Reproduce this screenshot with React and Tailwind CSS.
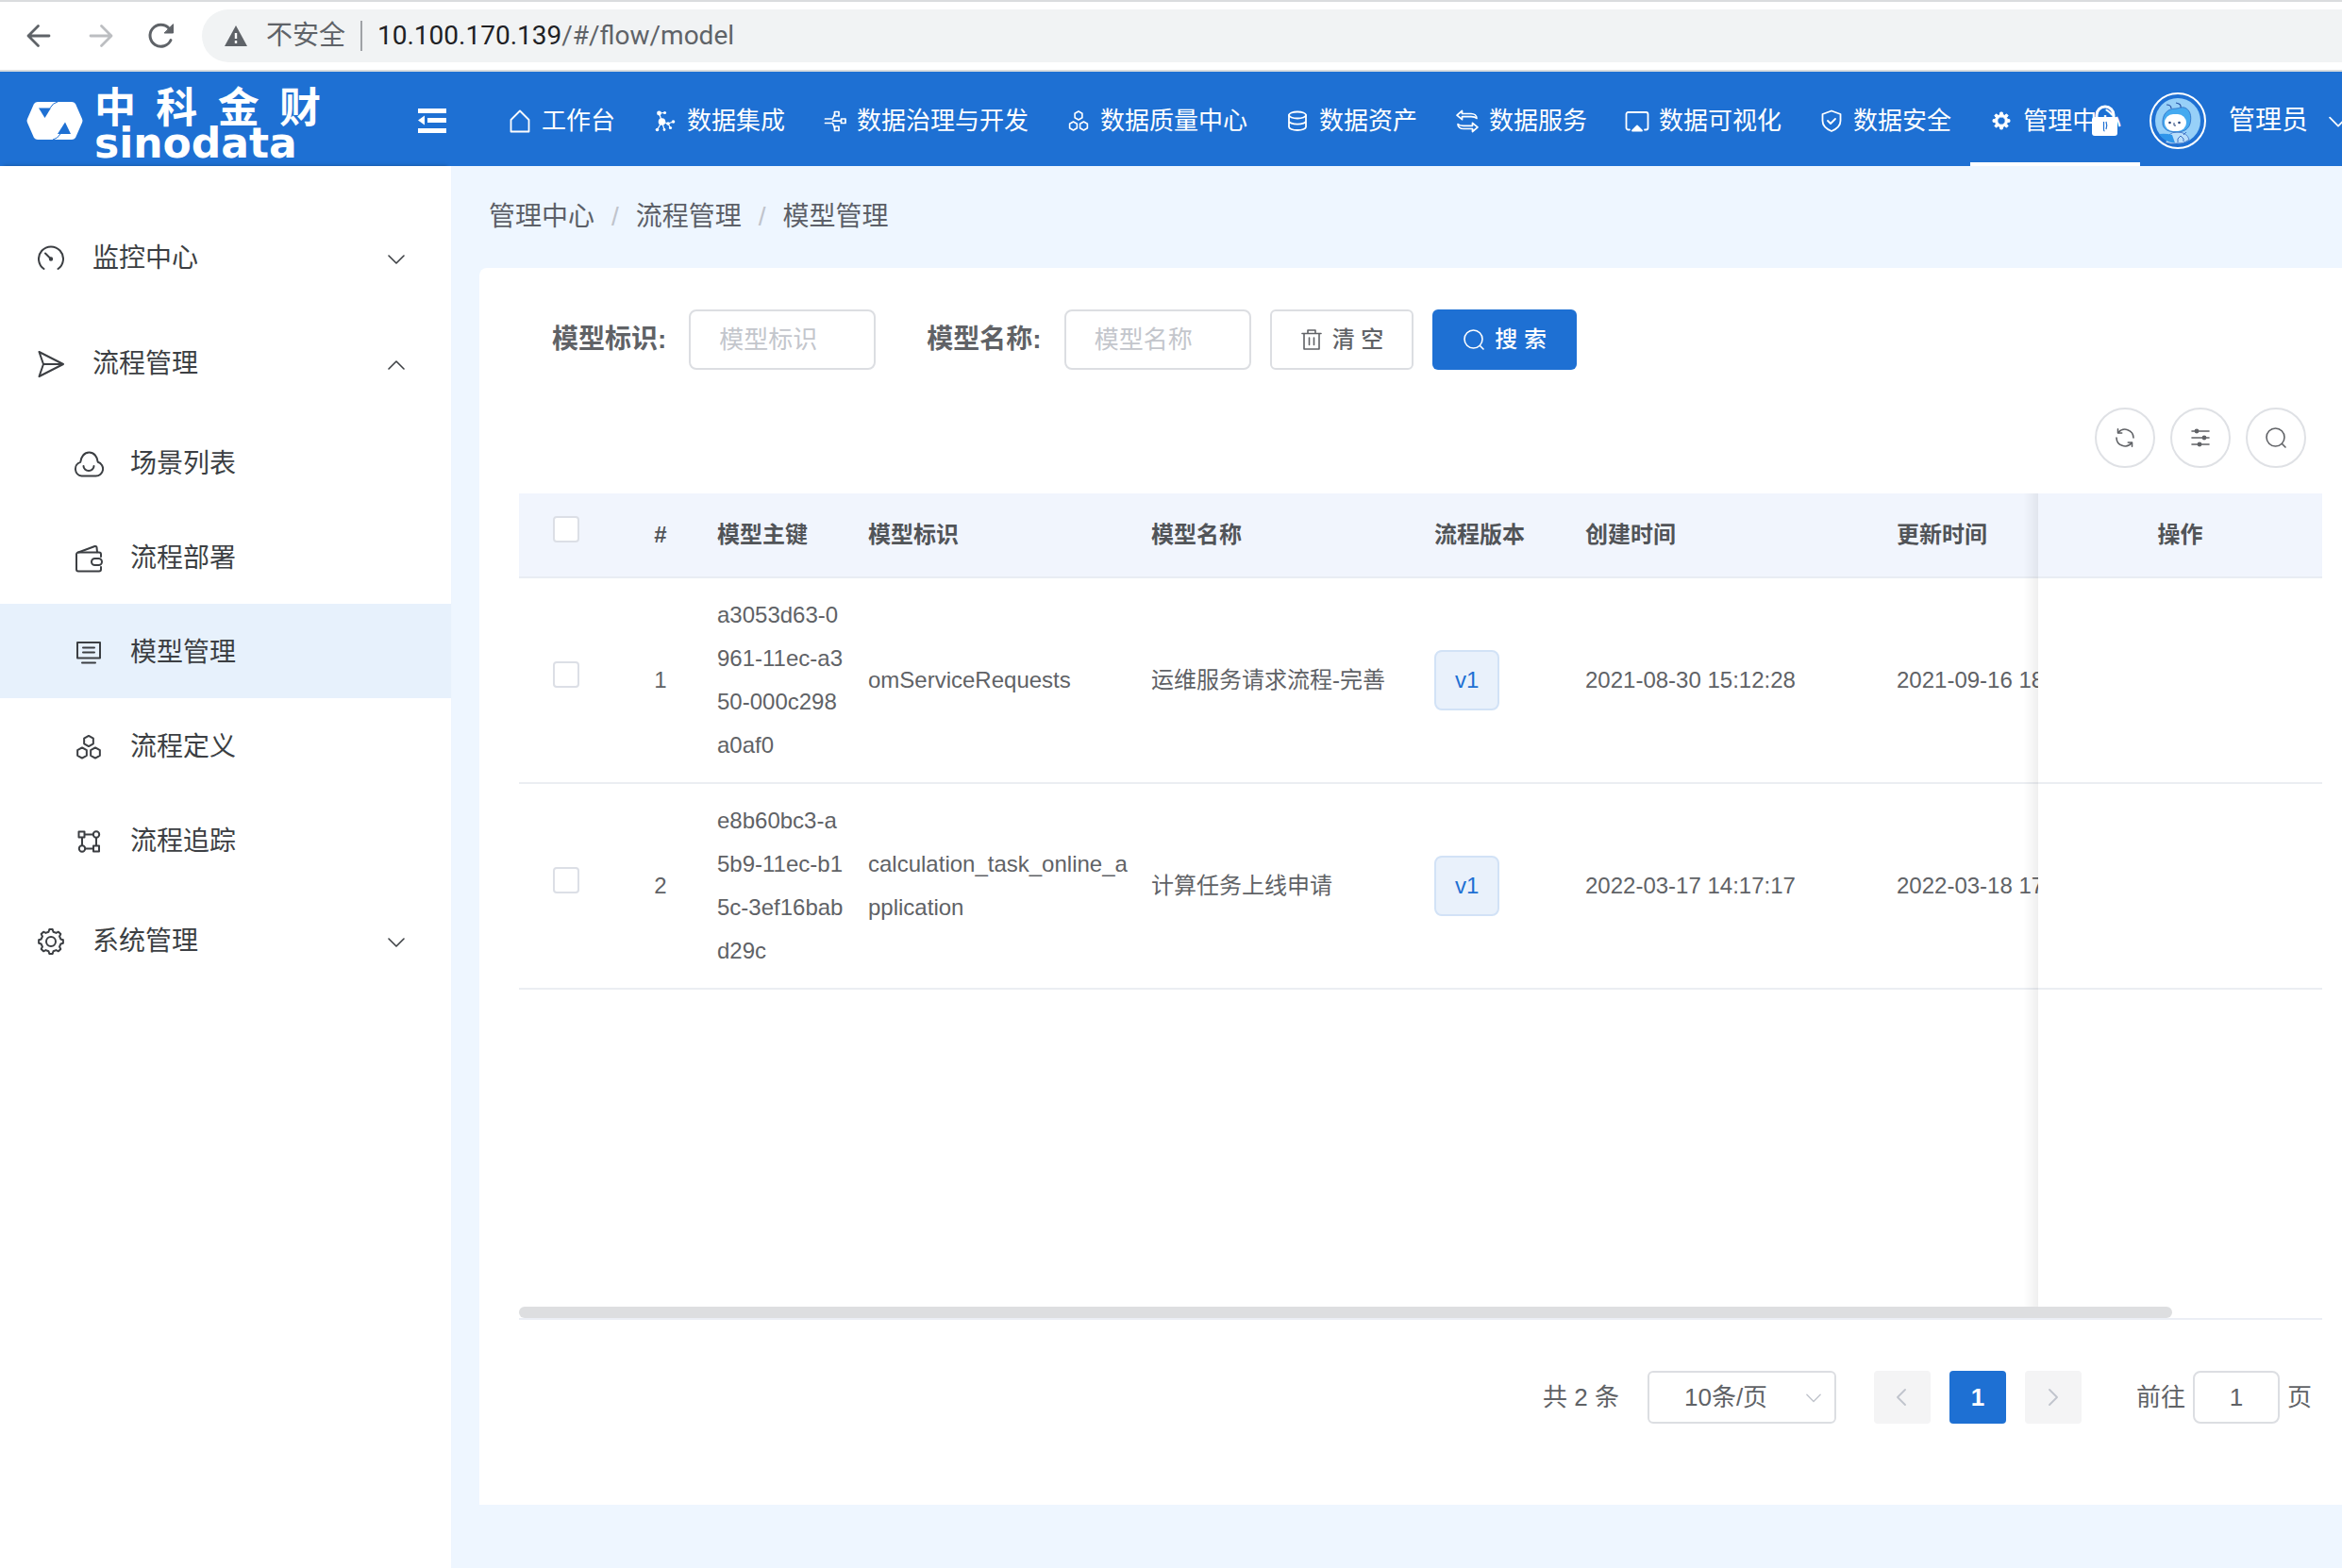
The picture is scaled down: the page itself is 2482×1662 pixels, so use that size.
import React, { useState } from 'react';

function Icon({ size = 26, box = size, width = 2, className = '', children }) {
  return (
    <svg
      width={size}
      height={size}
      viewBox={`0 0 ${box} ${box}`}
      fill="none"
      stroke="currentColor"
      strokeWidth={width}
      strokeLinecap="round"
      strokeLinejoin="round"
      className={`shrink-0 ${className}`}
      aria-hidden="true"
    >
      {children}
    </svg>
  );
}

const hexagon = (cx, cy, r) =>
  Array.from({ length: 6 }, (_, i) => {
    const a = (Math.PI / 3) * i - Math.PI / 2;
    return `${cx + r * Math.cos(a)},${cy + r * Math.sin(a)}`;
  }).join(' ');

const gearPoints = (c, outer, inner) => {
  const points = [];
  for (let i = 0; i < 8; i++) {
    const a = (Math.PI / 4) * i - Math.PI / 2;
    [[-0.24, inner], [-0.13, outer], [0.13, outer], [0.24, inner]].forEach(([d, r]) => {
      points.push(`${c + r * Math.cos(a + d)},${c + r * Math.sin(a + d)}`);
    });
  }
  return points.join(' ');
};

const HomeIcon = () => (
  <Icon width={1.8}>
    <path d="M3.5 24.5V12L13 2.5 22.5 12v12.500z" />
  </Icon>
);

const IntegrationIcon = () => (
  <Icon width={1.2}>
    <g fill="currentColor" stroke="none">
      <circle cx="6.500" cy="5" r="2.400" />
      <circle cx="12.500" cy="4.500" r="1.600" />
      <circle cx="9.500" cy="14" r="3.800" />
      <circle cx="4.500" cy="22.500" r="1.800" />
      <circle cx="12" cy="22.500" r="1.400" />
      <circle cx="16" cy="16" r="1.800" />
      <circle cx="21.500" cy="14" r="1.800" />
      <circle cx="18.500" cy="20.500" r="1.600" />
    </g>
    <path d="M6.500 5l3 9M9.500 14l-5 8.500M9.500 14l2.500 8.500M9.500 14l6.500 2 5.500-2M16 16l2.500 4.500M6.500 5l6-.5" />
  </Icon>
);

const GovernanceIcon = () => (
  <Icon width={1.7}>
    <path d="M2.500 11h8l2-4.500M2.500 15.500h8l2 5M10.500 13.200h8.500" />
    <rect x="12.500" y="3.500" width="4.500" height="4.500" />
    <rect x="19.500" y="11" width="4.500" height="4.500" />
    <rect x="12.500" y="19" width="4.500" height="4.500" />
  </Icon>
);

const QualityIcon = () => (
  <Icon width={1.6}>
    <polygon points={hexagon(13, 7.5, 4.5)} />
    <polygon points={hexagon(7.500, 18.5, 4.5)} />
    <polygon points={hexagon(18.500, 18.5, 4.5)} />
  </Icon>
);

const AssetIcon = () => (
  <Icon width={1.8}>
    <ellipse cx="13" cy="7" rx="9" ry="3.500" />
    <path d="M4 7v12.500c0 2 4 3.500 9 3.500s9-1.500 9-3.500V7M4 13.200c0 2 4 3.500 9 3.500s9-1.500 9-3.500" />
  </Icon>
);

const ServiceIcon = () => (
  <Icon width={1.7}>
    <path d="M7.500 2.500v3H17c3.500 0 6 2 6 5-1.500-1.500-3.500-1.800-6-1.800H7.500v3L2 7.200z" />
    <path d="M18.500 24.500v-3H9c-3.500 0-6-2-6-5 1.500 1.500 3.500 1.800 6 1.800h9.500v-3l5.500 4.600z" />
  </Icon>
);

const VisualIcon = () => (
  <Icon width={1.8}>
    <path d="M5 22.500H3.500a2 2 0 0 1-2-2V6a2 2 0 0 1 2-2h19a2 2 0 0 1 2 2v14.500a2 2 0 0 1-2 2H21" />
    <path d="M13 18.500l5 5H8z" fill="currentColor" />
  </Icon>
);

const SecurityIcon = () => (
  <Icon width={1.8}>
    <path d="M13 2.500l9.500 3.500v7c0 5-3.500 8.500-9.500 11-6-2.500-9.500-6-9.500-11V6z" />
    <path d="M9 13l3 3 5-5" />
  </Icon>
);

const AdminIcon = () => (
  <Icon width={1}>
    <path
      fillRule="evenodd"
      fill="currentColor"
      d={`M${gearPoints(13, 9, 6.6).replace(/ /g, 'L')}ZM13 8.800a4.200 4.200 0 1 0 0 8.400 4.200 4.200 0 1 0 0-8.400Z`}
    />
  </Icon>
);

const GaugeIcon = () => (
  <Icon size={28}>
    <path d="M6.500 25a13 13 0 1 1 15 0" />
    <path d="M8 8.500l6 6" />
    <circle cx="14" cy="14.500" r="1.200" fill="currentColor" />
  </Icon>
);

const SendIcon = () => (
  <Icon size={28}>
    <path d="M1.500 1L27 14 1.500 27l4.500-13zM6 14h21" />
  </Icon>
);

const SettingIcon = () => (
  <Icon size={28}>
    <polygon points={gearPoints(14, 13, 10.6)} />
    <circle cx="14" cy="14" r="5" />
  </Icon>
);

const CloudIcon = () => (
  <Icon size={32}>
    <path d="M8.500 28.500a7.500 7.500 0 0 1-1.300-14.600C7.800 8 11.500 3.500 16.500 3.500s8.800 4.500 9.200 10.300A7.500 7.500 0 0 1 23.500 28.500z" />
    <path d="M10.500 18a5.500 5 0 0 0 11 0" />
  </Icon>
);

const WalletIcon = () => (
  <Icon size={32}>
    <path d="M29 25v2.500a2 2 0 0 1-2 2H5a2 2 0 0 1-2-2v-16a2 2 0 0 1 2-2h22a2 2 0 0 1 2 2V14" />
    <path d="M5 9.500L22.500 3a1.500 1.500 0 0 1 2 1.200l.5 5" />
    <rect x="19" y="16" width="11" height="7" rx="3.500" />
  </Icon>
);

const ModelIcon = () => (
  <Icon size={32}>
    <rect x="4" y="5" width="24" height="16.500" />
    <path d="M10 10.500h12M10 15.500h12M9 26.500h14" />
  </Icon>
);

const DefinitionIcon = () => (
  <Icon size={32}>
    <polygon points={hexagon(16, 9.5, 5.6)} />
    <polygon points={hexagon(9, 22, 5.6)} />
    <polygon points={hexagon(23, 22, 5.6)} />
  </Icon>
);

const TraceIcon = () => (
  <Icon size={32}>
    <rect x="5.500" y="5.500" width="6" height="6" />
    <circle cx="24" cy="8.500" r="3.200" />
    <circle cx="9" cy="23.500" r="3.200" />
    <rect x="21" y="20.500" width="6" height="6" />
    <path d="M12 8.500h8.500M9 12v8M24 12v8M12.500 23.500H21" />
  </Icon>
);

const Chevron = ({ up, size = 18, width = 1.6 }) => (
  <Icon size={size} box={18} width={width}>
    <path d={up ? 'M1 14l8-8 8 8' : 'M1 6l8 8 8-8'} />
  </Icon>
);

const SearchIcon = ({ width = 1.6 }) => (
  <Icon size={24} width={width}>
    <circle cx="11.500" cy="11.500" r="9.500" />
    <path d="M18.500 18.500l3.500 3.500" />
  </Icon>
);

const TrashIcon = () => (
  <Icon size={24} width={1.6}>
    <path d="M2 5.500h20M8 5.500V2h8v3.500M4 5.500V22h16V5.500M9.500 10v7.500M14.500 10v7.500" />
  </Icon>
);

const RefreshIcon = () => (
  <Icon size={24} width={1.6}>
    <path d="M5 6.500A9 9 0 0 1 21 12M19 17.500A9 9 0 0 1 3 12" />
    <path d="M4.500 2.800v4.200h4.200M19.500 21.200v-4.200h-4.200" />
  </Icon>
);

const FilterIcon = () => (
  <Icon size={24} width={1.6}>
    <path d="M3 5h18M3 12h18M3 19h18" />
    <g fill="currentColor" stroke="none">
      <circle cx="8" cy="5" r="2.400" />
      <circle cx="16" cy="12" r="2.400" />
      <circle cx="11" cy="19" r="2.400" />
    </g>
  </Icon>
);

const LogoMark = () => (
  <svg width="60" height="42" viewBox="0 0 60 42" className="shrink-0" aria-hidden="true">
    <path d="M12 1h36q2.500 0 4 2l7 16q1 2 0 4l-7 16q-1.500 2-4 2H12q-2.500 0-4-2L1 23q-1-2 0-4L8 3q1.500-2 4-2z" fill="#fff" />
    <path d="M13 7.500h13L19.500 18z" fill="#1e70d3" />
    <path d="M33 35h14L41 22.500z" fill="#1e70d3" />
    <path d="M33 1q-5 1-8 6.500M28 41q5-1 8-6" fill="none" stroke="#1e70d3" strokeWidth="1" />
  </svg>
);

const LockIcon = () => (
  <svg width="28" height="34" viewBox="0 0 28 34" className="shrink-0" aria-hidden="true">
    <path d="M5 14v-3a9 9 0 0 1 18 0v3" fill="none" stroke="#fff" strokeWidth="3" />
    <rect x="0" y="13" width="27" height="20" rx="3" fill="#fff" />
    <path d="M12.500 18v8q0 2 1 2M15 18q1.500 4 0 8" fill="none" stroke="#1e70d3" strokeWidth="1.200" />
  </svg>
);

const Avatar = () => (
  <svg width="60" height="60" viewBox="0 0 60 60" className="shrink-0" role="img" aria-label="管理员">
    <circle cx="30" cy="30" r="29" fill="none" stroke="#fff" strokeWidth="2" />
    <circle cx="30" cy="30" r="24" fill="#97d0f8" />
    <path d="M17 53q2-11 12-11 11 0 13 8-6 5-13 4-7 1-12-1z" fill="#b9defa" stroke="#3d6fc4" strokeWidth="0.800" />
    <path d="M10 44q7-1 14 1l3 8.500q-11-.5-17-9.500z" fill="#2e95ea" />
    <path d="M14 34c-1-11 5-17 14-17 3 0 5-2 9-1 6 2 8 9 6 17-2 7-8 9-15 9-8 0-13-3-14-8z" fill="#45aaf0" stroke="#2e6fc4" strokeWidth="0.800" />
    <rect x="16" y="23" width="23" height="18" rx="9" fill="#fff" />
    <circle cx="21.500" cy="32" r="1.300" fill="#27457a" />
    <circle cx="31.500" cy="32" r="1.300" fill="#27457a" />
    <path d="M26 32v3h2" fill="none" stroke="#27457a" strokeWidth="1" />
    <path d="M23 17q0-4-5-4M33 16q1-4-5-5" fill="none" stroke="#2b57a8" strokeWidth="1.200" />
    <path d="M30 53v-4l3-3 3 3v3M36 45l3-3" fill="none" stroke="#3d6fc4" strokeWidth="1" />
  </svg>
);

const navItems = [
  { label: '工作台', icon: HomeIcon },
  { label: '数据集成', icon: IntegrationIcon },
  { label: '数据治理与开发', icon: GovernanceIcon },
  { label: '数据质量中心', icon: QualityIcon },
  { label: '数据资产', icon: AssetIcon },
  { label: '数据服务', icon: ServiceIcon },
  { label: '数据可视化', icon: VisualIcon },
  { label: '数据安全', icon: SecurityIcon },
  { label: '管理中心', icon: AdminIcon, active: true }
];

const flowItems = [
  { label: '场景列表', icon: CloudIcon },
  { label: '流程部署', icon: WalletIcon },
  { label: '模型管理', icon: ModelIcon, active: true },
  { label: '流程定义', icon: DefinitionIcon },
  { label: '流程追踪', icon: TraceIcon }
];

const models = [
  {
    id: 'a3053d63-0961-11ec-a350-000c298a0af0',
    key: 'omServiceRequests',
    name: '运维服务请求流程-完善',
    version: 'v1',
    created: '2021-08-30 15:12:28',
    updated: '2021-09-16 18:04:32'
  },
  {
    id: 'e8b60bc3-a5b9-11ec-b15c-3ef16babd29c',
    key: 'calculation_task_online_application',
    name: '计算任务上线申请',
    version: 'v1',
    created: '2022-03-17 14:17:17',
    updated: '2022-03-18 17:20:41'
  }
];

function BrowserBar() {
  return (
    <div className="flex h-[76px] items-center border-t-2 border-b-2 border-[#dadcde] bg-white pl-7 text-[28px] text-[#5f6368]">
      <button type="button" aria-label="后退">
        <Icon size={26} width={2.8}>
          <path d="M24 13H2M12.500 2.500L2 13l10.500 10.500" />
        </Icon>
      </button>
      <button type="button" aria-label="前进" className="ml-10 text-[#bcbec1]">
        <Icon size={26} width={2.8}>
          <path d="M2 13h22M13.500 2.500L24 13 13.500 23.500" />
        </Icon>
      </button>
      <button type="button" aria-label="重新加载" className="ml-9">
        <Icon size={30} width={3}>
          <path d="M25 19.500A11.500 11.500 0 1 1 23 7" />
          <path d="M27.500 3v9h-9z" fill="currentColor" strokeWidth="1" />
        </Icon>
      </button>
      <div className="ml-7 flex h-14 flex-1 items-center rounded-l-full bg-[#f1f3f4] pl-6">
        <svg width="24" height="22" viewBox="0 0 24 22" aria-hidden="true">
          <path d="M12 0l12 22H0z" fill="#5f6368" />
          <path d="M12 8v6M12 16v3" stroke="#fff" strokeWidth="2.400" />
        </svg>
        <span className="ml-5">不安全</span>
        <span className="mx-4 h-8 w-0.5 bg-[#9fa2a6]"></span>
        <span className="font-[Roboto]">
          <span className="text-[#202124]">10.100.170.139</span>/#/flow/model
        </span>
      </div>
    </div>
  );
}

function Header() {
  return (
    <header className="flex h-[100px] items-center overflow-x-clip bg-[#1e70d3] pt-1 text-white">
      <div className="flex w-[518px] shrink-0 items-center justify-between pr-[45px] pl-7">
        <a href="#/" className="flex items-center gap-3">
          <LogoMark />
          <span className="flex w-60 flex-col pt-1">
            <span className="flex justify-between text-[44px] leading-[44px] font-bold">
              <span>中</span>
              <span>科</span>
              <span>金</span>
              <span>财</span>
            </span>
            <span className="font-['DejaVu_Sans'] text-[44px] leading-[30px] font-bold">sinodata</span>
          </span>
        </a>
        <button type="button" aria-label="收起菜单">
          <svg width="30" height="26" viewBox="0 0 30 26" fill="currentColor" aria-hidden="true">
            <path d="M0 0h30v5H0zM10 10h20v5H10zM0 21h30v5H0zM0 12.500l7-5v10z" />
          </svg>
        </button>
      </div>
      <nav className="flex h-full min-w-0 flex-1">
        {navItems.map(({ label, icon: NavIcon, active }) => (
          <a
            key={label}
            href="#/"
            className={`flex shrink-0 items-center gap-[10px] border-y-4 border-transparent px-5 text-[26px] ${
              active ? 'border-b-white' : ''
            }`}
          >
            <NavIcon />
            {label}
          </a>
        ))}
      </nav>
      <div className="relative flex w-[265px] shrink-0 items-center">
        <button type="button" aria-label="锁屏">
          <LockIcon />
        </button>
        <span className="ml-[33px] shrink-0">
          <Avatar />
        </span>
        <button type="button" className="ml-6 flex shrink-0 items-center gap-[22px] text-[28px]">
          管理员
          <Chevron size={20} />
        </button>
      </div>
    </header>
  );
}

function SideGroup({ icon: GroupIcon, label, open, onClick }) {
  return (
    <button type="button" onClick={onClick} className="flex h-28 w-full items-center pt-1 pr-[49px] pl-10 text-left">
      <GroupIcon />
      <span className="ml-[30px] flex-1">{label}</span>
      <Chevron up={open} />
    </button>
  );
}

function Sidebar() {
  const [open, setOpen] = useState(true);

  return (
    <aside className="w-[478px] shrink-0 bg-white pt-10 text-[28px] text-[#3c3f43] shadow-[0_-4px_4px_-4px_rgba(0,0,0,0.3)]">
      <SideGroup icon={GaugeIcon} label="监控中心" />
      <SideGroup icon={SendIcon} label="流程管理" open={open} onClick={() => setOpen(!open)} />
      {open &&
        flowItems.map(({ label, icon: ItemIcon, active }) => (
          <a
            key={label}
            href="#/flow/model"
            className={`flex h-[100px] items-center gap-7 pt-1 pl-[78px] ${active ? 'bg-[#e7f1fc]' : ''}`}
          >
            <ItemIcon />
            {label}
          </a>
        ))}
      <SideGroup icon={SettingIcon} label="系统管理" />
    </aside>
  );
}

function Checkbox({ label }) {
  return (
    <input
      type="checkbox"
      aria-label={label}
      className="mx-auto mb-3 block size-7 appearance-none rounded-sm border-2 border-[#dcdfe6] bg-white checked:bg-[#1e70d3]"
    />
  );
}

function SearchForm() {
  const inputClass =
    'h-16 w-[198px] rounded-lg border-2 border-[#dcdee2] bg-white px-[30px] text-[26px] text-[#606266] placeholder:text-[#c3c6cc]';
  return (
    <form className="flex items-center pl-[35px] text-[#606266]" onSubmit={e => e.preventDefault()}>
      <label htmlFor="model-key" className="mr-6 text-[28px] font-bold">模型标识:</label>
      <input id="model-key" placeholder="模型标识" className={inputClass} />
      <label htmlFor="model-name" className="mr-6 ml-[54px] text-[28px] font-bold">模型名称:</label>
      <input id="model-name" placeholder="模型名称" className={inputClass} />
      <button type="reset" className="ml-5 flex h-16 items-center gap-[10px] rounded-md border-2 border-[#dcdee2] px-[30px] text-2xl font-medium">
        <TrashIcon />
        清 空
      </button>
      <button type="submit" className="ml-5 flex h-16 items-center gap-[10px] rounded-md bg-[#1e70d3] px-8 text-2xl font-medium text-white">
        <SearchIcon />
        搜 索
      </button>
    </form>
  );
}

function ModelTable() {
  return (
    <div className="relative min-h-[876px] overflow-hidden border-b-2 border-[#ebeef5]">
      <table className="w-[2087px] table-fixed border-separate border-spacing-0 text-left text-2xl text-[#606266]">
        <colgroup>
          <col className="w-[100px]" />
          <col className="w-[100px]" />
          <col className="w-[160px]" />
          <col className="w-[300px]" />
          <col className="w-[300px]" />
          <col className="w-[160px]" />
          <col className="w-[330px]" />
          <col />
          <col className="w-[301px]" />
        </colgroup>
        <thead>
          <tr className="h-[90px] text-[#515458] *:border-b-2 *:border-[#e9edf3] *:bg-[#f1f5fd] *:px-[10px] *:font-bold">
            <th><Checkbox label="全选" /></th>
            <th className="text-center">#</th>
            <th>模型主键</th>
            <th>模型标识</th>
            <th>模型名称</th>
            <th>流程版本</th>
            <th>创建时间</th>
            <th>更新时间</th>
            <th className="sticky right-0 text-center">操作</th>
          </tr>
        </thead>
        <tbody>
          {models.map((model, index) => (
            <tr key={model.id} className="*:border-b-2 *:border-[#ebeef2] *:bg-white *:px-[10px] *:py-4">
              <td><Checkbox label={`选择 ${index + 1}`} /></td>
              <td className="text-center">{index + 1}</td>
              <td className="leading-[46px] break-all">{model.id}</td>
              <td className="leading-[46px] break-all">{model.key}</td>
              <td>{model.name}</td>
              <td>
                <span className="inline-flex h-16 items-center rounded-lg border-2 border-[#d2e2f6] bg-[#e9f1fb] px-5 text-[#1e70d3]">
                  {model.version}
                </span>
              </td>
              <td className="whitespace-nowrap">{model.created}</td>
              <td className="whitespace-nowrap">{model.updated}</td>
              <td className="sticky right-0"></td>
            </tr>
          ))}
        </tbody>
      </table>
      {/* edge shadow of the fixed column */}
      <div className="absolute inset-y-0 right-[301px] w-4 bg-linear-to-l from-black/6 to-transparent"></div>
      <div className="absolute bottom-0 left-0 h-3 w-[1752px] rounded-full bg-[#dddee0]"></div>
    </div>
  );
}

function Pagination() {
  return (
    <div className="flex items-center justify-end pr-[11px] text-[26px] text-[#606266]">
      <span>共 2 条</span>
      <div className="relative ml-[30px]">
        <select
          aria-label="每页条数"
          className="h-14 w-[200px] appearance-none rounded-md border-2 border-[#dcdee2] bg-white pl-[37px]"
        >
          <option>10条/页</option>
          <option>20条/页</option>
        </select>
        <span className="pointer-events-none absolute top-5 right-4 text-[#c0c4cc]">
          <Chevron size={16} />
        </span>
      </div>
      <button type="button" aria-label="上一页" disabled className="ml-10 flex h-14 w-[60px] items-center justify-center rounded-sm bg-[#f4f4f5] text-[#c0c4cc]">
        <Icon size={18} width={1.8}>
          <path d="M12 1L4 9l8 8" />
        </Icon>
      </button>
      <button type="button" aria-current="page" className="ml-5 h-14 w-[60px] rounded-sm bg-[#1e70d3] font-bold text-white">
        1
      </button>
      <button type="button" aria-label="下一页" disabled className="ml-5 flex h-14 w-[60px] items-center justify-center rounded-sm bg-[#f4f4f5] text-[#c0c4cc]">
        <Icon size={18} width={1.8}>
          <path d="M5 1l8 8-8 8" />
        </Icon>
      </button>
      <label htmlFor="page-jump" className="ml-[58px]">前往</label>
      <input id="page-jump" defaultValue="1" className="mx-2 h-14 w-[92px] rounded-lg border-2 border-[#dcdee2] text-center" />
      <span>页</span>
    </div>
  );
}

function App() {
  const roundButton = 'flex size-16 items-center justify-center rounded-full border-2 border-[#dfe1e5] bg-white';
  return (
    <div className="flex min-h-screen flex-col bg-[#eef6ff] font-['Liberation_Sans','Noto_Sans_CJK_SC',sans-serif]">
      <BrowserBar />
      <Header />
      <div className="flex flex-1">
        <Sidebar />
        <main className="min-w-0 flex-1 pl-[30px]">
          <nav className="flex h-[108px] items-center gap-[18px] pl-[10px] text-[28px] text-[#5c6068]">
            <a href="#/">管理中心</a>
            <span className="text-[#c0c4cc]">/</span>
            <a href="#/flow">流程管理</a>
            <span className="text-[#c0c4cc]">/</span>
            <span>模型管理</span>
          </nav>
          <section className="rounded-tl-lg bg-white pt-11 pr-[21px] pb-[86px] pl-[42px]">
            <SearchForm />
            <div className="flex justify-end gap-4 pt-10 pr-[17px] pb-[27px] text-[#606266]">
              <button type="button" aria-label="刷新" className={roundButton}><RefreshIcon /></button>
              <button type="button" aria-label="列设置" className={roundButton}><FilterIcon /></button>
              <button type="button" aria-label="搜索" className={roundButton}><SearchIcon /></button>
            </div>
            <ModelTable />
            <div className="pt-[54px]">
              <Pagination />
            </div>
          </section>
        </main>
      </div>
    </div>
  );
}

export default App;
